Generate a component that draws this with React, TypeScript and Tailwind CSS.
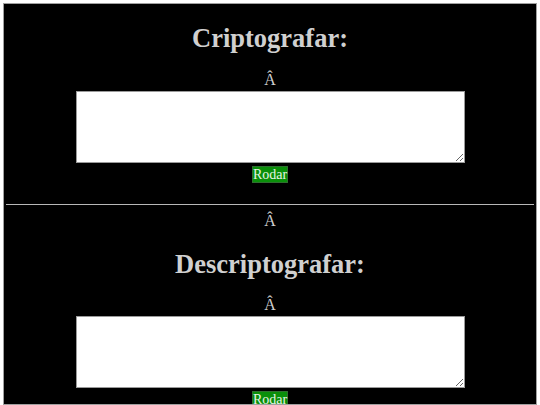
const serif = { fontFamily: '"Liberation Serif", "Times New Roman", serif' };

function Block({ title, second }: { title: string; second?: boolean }) {
  return (
    <div className="flex flex-col items-center">
      {second && <p className="mt-[7px] text-[16px] leading-[18px] text-[#cfcfcf]">Â</p>}
      <h1 className="mt-[18px] text-[26.5px] font-bold leading-[32px] text-[#d0d0d0]">{title}</h1>
      <p
        className={`${second ? "mt-[16px]" : "mt-[17px]"} text-[16px] leading-[18px] text-[#cfcfcf]`}
      >
        Â
      </p>
      <textarea className="mt-[2px] block h-[72px] w-[389px] resize border border-[#9a9a9a] bg-white" />
      <button className="mt-[3px] h-[17px] border border-[#2f6f2f] bg-[#0a8f0a] px-0 text-[14px] leading-[15px] text-[#e6f5e6]">
        Rodar
      </button>
    </div>
  );
}

export default function App() {
  return (
    <div className="min-h-[405px] bg-white p-[3px]" style={serif}>
      <div className="h-[402px] overflow-hidden border border-[#a0a0a0] bg-black">
        <Block title="Criptografar:" />
        <hr className="mx-[2px] mt-[21px] border-t border-[#b8b8b8]" />
        <Block title="Descriptografar:" second />
      </div>
    </div>
  );
}
